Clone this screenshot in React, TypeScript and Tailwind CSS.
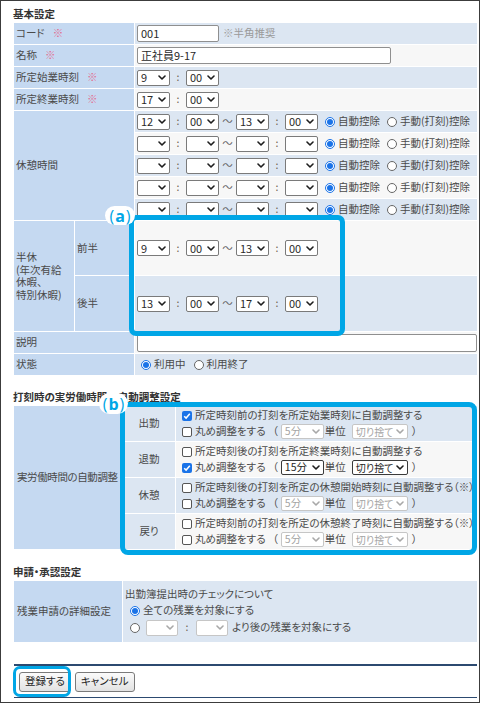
import React from 'react'

const LABEL = 'bg-[#c5d9f1]'
const BLUE = 'bg-[#dce6f2]'
const GRAY = 'bg-[#f7f7f7]'

function Chevron({ muted }: { muted?: boolean }) {
  return (
    <svg width="8" height="5" viewBox="0 0 8 5" className="shrink-0">
      <path
        d="M1 1l3 3 3-3"
        fill="none"
        stroke={muted ? '#a8a8a8' : '#1e1e1e'}
        strokeWidth="1.6"
        strokeLinecap="round"
        strokeLinejoin="round"
      />
    </svg>
  )
}

function Select({
  value = '',
  w = 'w-[33px]',
  h = 'h-[16px]',
  size = 'text-[11px]',
  muted,
  dark,
}: {
  value?: string
  w?: string
  h?: string
  size?: string
  muted?: boolean
  dark?: boolean
}) {
  const tone = muted
    ? 'border-[#c6c6c6] text-[#a4a4a4]'
    : dark
      ? 'border-[#3a3a3a] text-[#1e1e1e]'
      : 'border-[#7a7a7a] text-[#2a2a2a]'
  return (
    <div
      className={`${w} ${h} ${tone} ${size} shrink-0 flex items-center justify-between pl-[3px] pr-[3px] bg-white rounded-[2px] border leading-none whitespace-nowrap`}
    >
      <span>{value}</span>
      <Chevron muted={muted} />
    </div>
  )
}

function Input({ w, value = '' }: { w: string; value?: string }) {
  return (
    <div
      className={`${w} h-[17px] shrink-0 flex items-center pl-[3px] bg-white border border-[#8f8f8f] rounded-[2px] text-[11px] text-[#2a2a2a]`}
    >
      {value}
    </div>
  )
}

function Radio({ checked }: { checked?: boolean }) {
  return checked ? (
    <span className="w-[10px] h-[10px] shrink-0 rounded-full border border-[#1a73e8] bg-white flex items-center justify-center">
      <span className="block w-[6px] h-[6px] rounded-full bg-[#1a73e8]" />
    </span>
  ) : (
    <span className="block w-[10px] h-[10px] shrink-0 rounded-full border border-[#666] bg-white" />
  )
}

function Check({ checked }: { checked?: boolean }) {
  return checked ? (
    <span className="w-[10px] h-[10px] shrink-0 rounded-[2px] bg-[#1a73e8] flex items-center justify-center">
      <svg width="8" height="8" viewBox="0 0 8 8">
        <path d="M1.2 4.2l1.9 1.9 3.7-4.3" fill="none" stroke="#fff" strokeWidth="1.5" />
      </svg>
    </span>
  ) : (
    <span className="block w-[10px] h-[10px] shrink-0 rounded-[2px] border border-[#555] bg-white" />
  )
}

function Req() {
  return <span className="ml-[8px] text-[#e36a8e]">※</span>
}

function Colon({ w = 'w-[16px]' }: { w?: string }) {
  return <span className={`${w} shrink-0 text-center text-[#6a5a4a]`}>:</span>
}

function TimeRange({ v }: { v: string[] }) {
  return (
    <div className="flex items-center">
      <Select value={v[0]} />
      <Colon />
      <Select value={v[1]} />
      <span className="w-[17px] shrink-0 text-center text-[#666]">～</span>
      <Select value={v[2]} />
      <Colon />
      <Select value={v[3]} />
    </div>
  )
}

function Label({ children, w = 'w-[120px]' }: { children: React.ReactNode; w?: string }) {
  return <div className={`${w} ${LABEL} shrink-0 flex items-center pl-[2px]`}>{children}</div>
}

function Title({ children, mt }: { children: React.ReactNode; mt: string }) {
  return (
    <div className={`${mt} h-[15px] flex items-center -ml-[1px] font-bold text-[#333]`}>{children}</div>
  )
}

function Button({ children }: { children: React.ReactNode }) {
  return (
    <div className="h-[20px] px-[5px] flex items-center border border-[#7a7a7a] rounded-[3px] bg-gradient-to-b from-[#fbfbfb] to-[#e2e2e2] text-[#1e1e1e]">
      {children}
    </div>
  )
}

function Badge({ letter, pos }: { letter: string; pos: string }) {
  return (
    <div
      className={`absolute ${pos} rounded-full bg-white flex items-center justify-center text-[#00a6e6] text-[16px] leading-none font-['Open_Sans',sans-serif]`}
    >
      <span className="font-normal">(</span>
      <span className="font-bold mx-[1px]">{letter}</span>
      <span className="font-normal">)</span>
    </div>
  )
}

const breaks = [
  ['12', '00', '13', '00'],
  ['', '', '', ''],
  ['', '', '', ''],
  ['', '', '', ''],
  ['', '', '', ''],
]

const adjust = [
  {
    name: '出勤',
    text: '所定時刻前の打刻を所定始業時刻に自動調整する',
    c1: true,
    c2: false,
    min: '5分',
    mode: '切り捨て',
  },
  {
    name: '退勤',
    text: '所定時刻後の打刻を所定終業時刻に自動調整する',
    c1: false,
    c2: true,
    min: '15分',
    mode: '切り捨て',
  },
  {
    name: '休憩',
    text: '所定時刻後の打刻を所定の休憩開始時刻に自動調整する（※）',
    c1: false,
    c2: false,
    min: '5分',
    mode: '切り捨て',
  },
  {
    name: '戻り',
    text: '所定時刻前の打刻を所定の休憩終了時刻に自動調整する（※）',
    c1: false,
    c2: false,
    min: '5分',
    mode: '切り捨て',
  },
]

export default function App() {
  return (
    <div className="relative w-[480px] h-[703px] overflow-hidden bg-white border border-[#3c3c3c] font-['Noto_Sans_CJK_JP',sans-serif] [font-feature-settings:'palt'] text-[10.5px] leading-none text-[#4a4a4a]">
      <div className="pt-[6px] pl-[13px] pr-[2px] flex flex-col">
        {/* 基本設定 */}
        <Title mt="mt-0">基本設定</Title>
        <div className="mt-[1px] flex flex-col gap-px">
          <div className="flex gap-px h-[21px]">
            <Label>
              コード
              <Req />
            </Label>
            <div className={`flex-1 ${BLUE} flex items-center pl-[2px]`}>
              <Input w="w-[82px]" value="001" />
              <span className="ml-[4px] text-[#9a9a9a]">※半角推奨</span>
            </div>
          </div>
          <div className="flex gap-px h-[21px]">
            <Label>
              名称
              <Req />
            </Label>
            <div className={`flex-1 ${GRAY} flex items-center pl-[2px]`}>
              <Input w="w-[254px]" value="正社員9-17" />
            </div>
          </div>
          <div className="flex gap-px h-[21px]">
            <Label>
              所定始業時刻
              <Req />
            </Label>
            <div className={`flex-1 ${BLUE} flex items-center pl-[2px]`}>
              <Select value="9" />
              <Colon />
              <Select value="00" />
            </div>
          </div>
          <div className="flex gap-px h-[21px]">
            <Label>
              所定終業時刻
              <Req />
            </Label>
            <div className={`flex-1 ${GRAY} flex items-center pl-[2px]`}>
              <Select value="17" />
              <Colon />
              <Select value="00" />
            </div>
          </div>

          {/* 休憩時間 */}
          <div className="flex gap-px">
            <Label>休憩時間</Label>
            <div className="flex-1 flex flex-col gap-px">
              {breaks.map((b, i) => (
                <div
                  key={i}
                  className={`h-[21px] flex items-center pl-[2px] ${i % 2 === 0 ? BLUE : GRAY}`}
                >
                  <TimeRange v={b} />
                  <span className="ml-[7px]">
                    <Radio checked />
                  </span>
                  <span className="ml-[3px]">自動控除</span>
                  <span className="ml-[7px]">
                    <Radio />
                  </span>
                  <span className="ml-[3px]">手動(打刻)控除</span>
                </div>
              ))}
            </div>
          </div>

          {/* 半休 */}
          <div className="flex gap-px">
            <div className={`w-[60px] shrink-0 ${LABEL} flex items-center pl-[2px] leading-[12.5px]`}>
              <div>
                半休
                <br />
                (年次有給
                <br />
                休暇、
                <br />
                特別休暇)
              </div>
            </div>
            <div className="flex-1 flex flex-col gap-px">
              <div className="h-[54px] flex gap-px">
                <Label w="w-[59px]">前半</Label>
                <div className={`flex-1 ${GRAY} flex items-center pl-[2px]`}>
                  <TimeRange v={['9', '00', '13', '00']} />
                </div>
              </div>
              <div className="h-[55px] flex gap-px">
                <Label w="w-[59px]">後半</Label>
                <div className={`flex-1 ${BLUE} flex items-center pl-[2px]`}>
                  <TimeRange v={['13', '00', '17', '00']} />
                </div>
              </div>
            </div>
          </div>

          <div className="flex gap-px h-[21px]">
            <Label>説明</Label>
            <div className={`flex-1 ${GRAY} flex items-center pl-[2px]`}>
              <div className="flex-1 h-[18px] bg-white border border-[#8f8f8f] rounded-[2px]" />
            </div>
          </div>
          <div className="flex gap-px h-[21px]">
            <Label>状態</Label>
            <div className={`flex-1 ${BLUE} flex items-center pl-[6px]`}>
              <Radio checked />
              <span className="ml-[3px]">利用中</span>
              <span className="ml-[8px]">
                <Radio />
              </span>
              <span className="ml-[3px]">利用終了</span>
            </div>
          </div>
        </div>

        {/* 打刻時の実労働時間の自動調整設定 */}
        <Title mt="mt-[15px]">打刻時の実労働時間の自動調整設定</Title>
        <div className="mt-[1px] flex gap-px">
          <div className={`w-[108px] shrink-0 ${LABEL} flex items-center pl-[3px] tracking-[-0.4px]`}>
            実労働時間の自動調整
          </div>
          <div className="flex-1 flex flex-col gap-px">
            {adjust.map((r, i) => {
              const bg = i % 2 === 0 ? BLUE : GRAY
              const on = r.c2
              return (
                <div key={r.name} className="h-[35px] flex gap-px">
                  <div className={`w-[52px] shrink-0 ${BLUE} flex items-center justify-center`}>
                    {r.name}
                  </div>
                  <div className={`flex-1 ${bg} flex flex-col justify-center gap-[1px] pl-[6px]`}>
                    <div className="h-[15px] flex items-center whitespace-nowrap">
                      <Check checked={r.c1} />
                      <span className="ml-[3px]">{r.text}</span>
                    </div>
                    <div className="h-[15px] flex items-center whitespace-nowrap">
                      <Check checked={r.c2} />
                      <span className="ml-[3px]">丸め調整をする</span>
                      <span className="ml-[7px]">（</span>
                      <span className="ml-[3px]">
                        <Select
                          value={r.min}
                          w="w-[43px]"
                          h="h-[15px]"
                          size="text-[10.5px]"
                          muted={!on}
                          dark={on}
                        />
                      </span>
                      <span className="ml-[1px]">単位</span>
                      <span className="ml-[6px]">
                        <Select
                          value={r.mode}
                          w="w-[56px]"
                          h="h-[15px]"
                          size="text-[10px]"
                          muted={!on}
                          dark={on}
                        />
                      </span>
                      <span className="ml-[4px]">）</span>
                    </div>
                  </div>
                </div>
              )
            })}
          </div>
        </div>

        {/* 申請・承認設定 */}
        <Title mt="mt-[16px]">申請・承認設定</Title>
        <div className="mt-[1px] flex gap-px h-[61px]">
          <div className={`w-[108px] shrink-0 ${LABEL} flex items-center pl-[3px]`}>
            残業申請の詳細設定
          </div>
          <div className={`flex-1 ${BLUE} flex flex-col justify-center pl-[2px]`}>
            <div className="h-[16px] flex items-center">出勤簿提出時のチェックについて</div>
            <div className="h-[16px] flex items-center pl-[5px]">
              <Radio checked />
              <span className="ml-[3px]">全ての残業を対象にする</span>
            </div>
            <div className="h-[18px] flex items-center pl-[5px]">
              <Radio />
              <span className="ml-[6px]">
                <Select w="w-[32px]" muted />
              </span>
              <Colon w="w-[18px]" />
              <Select w="w-[32px]" muted />
              <span className="ml-[4px]">より後の残業を対象にする</span>
            </div>
          </div>
        </div>

        {/* Footer */}
        <div className="mt-[22px] h-[2px] bg-[#2c4a70]" />
        <div className="h-[31px] flex items-center gap-[4px] pl-[5px]">
          <Button>登録する</Button>
          <Button>キャンセル</Button>
        </div>
        <div className="h-[1px] bg-[#2c4a70]" />
      </div>

      {/* (a) highlight */}
      <div className="absolute left-[128px] top-[214px] w-[216px] h-[121px] border-[5px] border-[#00a6e6] rounded-[7px]" />
      <Badge letter="a" pos="left-[104px] top-[205px] w-[30px] h-[19px]" />

      {/* (b) highlight */}
      <div className="absolute left-[119px] top-[401px] w-[357px] h-[153px] border-[5px] border-[#00a6e6] rounded-[8px]" />
      <Badge letter="b" pos="left-[98px] top-[392px] w-[29px] h-[21px]" />

      {/* submit highlight */}
      <div className="absolute left-[12px] top-[665px] w-[58px] h-[31px] border-[3px] border-[#00a6e6] rounded-[7px]" />
    </div>
  )
}
